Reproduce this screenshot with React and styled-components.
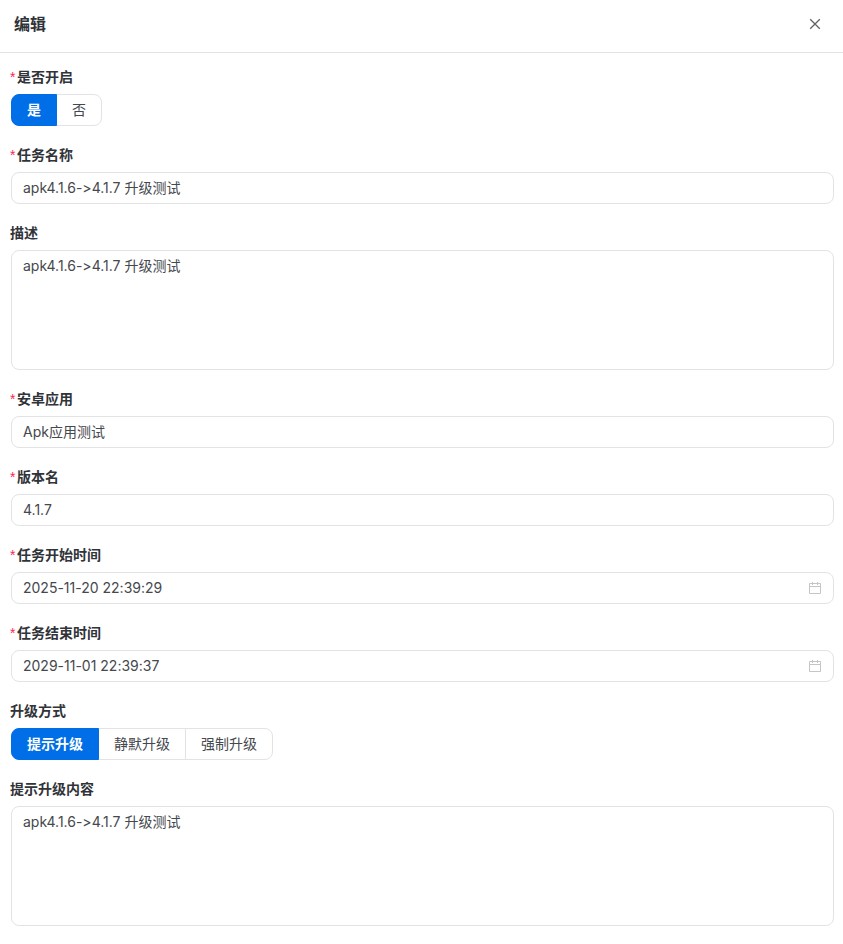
import React, { useId, useState } from "react";
import styled, { createGlobalStyle } from "styled-components";

const GlobalStyle = createGlobalStyle`
  *, *::before, *::after { box-sizing: border-box; }
  body {
    margin: 0;
    background: #fff;
    color: #45484d;
    font-family: Inter, "Noto Sans CJK SC", sans-serif;
    font-size: 14px;
    line-height: 22px;
    font-variant-ligatures: none;
  }
  input, textarea, button { font: inherit; color: inherit; font-variant-ligatures: none; }
`;

const Header = styled.header`
  display: flex;
  align-items: center;
  justify-content: space-between;
  padding: 12px 20px 16px 14px;
  border-bottom: 1px solid #e2e3e5;
`;

const Title = styled.h1`
  margin: 0;
  color: #303338;
  font-size: 16px;
  font-weight: 600;
  line-height: 24px;
`;

const CloseButton = styled.button`
  display: flex;
  padding: 0;
  border: 0;
  background: none;
  color: #606266;
  cursor: pointer;
`;

const Form = styled.form`
  display: flex;
  flex-direction: column;
  gap: 18px;
  padding: 13px 9px 18px 11px;
`;

const Field = styled.div`
  display: flex;
  flex-direction: column;
  gap: 6px;
`;

const Group = styled.fieldset`
  min-width: 0;
  margin: 0;
  padding: 0;
  border: 0;
`;

const Label = styled.label`
  display: flex;
  align-items: center;
  gap: 1px;
  margin-left: -1px;
  color: #303338;
  font-weight: 600;
`;

const Required = styled.span`
  width: 6px;
  color: #ff1f4b;
  font-family: "Liberation Sans", sans-serif;
  font-size: 14px;
  font-weight: 400;
`;

const TextBox = styled.input`
  width: 100%;
  height: 32px;
  padding: 0 11px 2px;
  border: 1px solid #e2e3e5;
  border-radius: 8px;
  background: #fff;
  outline: none;

  &:focus { border-color: #006ee6; }
`;

const TextArea = styled.textarea`
  display: block;
  width: 100%;
  height: 120px;
  padding: 4px 11px;
  border: 1px solid #e2e3e5;
  border-radius: 8px;
  background: #fff;
  outline: none;
  resize: none;

  &:focus { border-color: #006ee6; }
`;

const DateBox = styled.div`
  display: flex;
  align-items: center;
  height: 32px;
  padding: 0 11px;
  border: 1px solid #e2e3e5;
  border-radius: 8px;
  color: #45484d;

  &:focus-within { border-color: #006ee6; }

  svg {
    flex: none;
    color: #c4c5c7;
  }
`;

const DateInput = styled.input`
  flex: 1;
  min-width: 0;
  padding: 0;
  border: 0;
  background: none;
  outline: none;
`;

const Segments = styled.div`
  display: flex;
`;

const Segment = styled.label`
  position: relative;
  height: 32px;
  padding: 4px 15px;
  border: 1px solid ${(p) => (p.$active ? "#006ee6" : "#e2e3e5")};
  background: ${(p) => (p.$active ? "#006ee6" : "#fff")};
  color: ${(p) => (p.$active ? "#fff" : "inherit")};
  font-weight: ${(p) => (p.$active ? 600 : 400)};
  z-index: ${(p) => (p.$active ? 1 : 0)};
  cursor: pointer;

  &:first-child { border-radius: 8px 0 0 8px; }
  &:last-child { border-radius: 0 8px 8px 0; }
  & + & { margin-left: -1px; }
`;

const HiddenRadio = styled.input`
  position: absolute;
  inset: 0;
  width: 100%;
  height: 100%;
  margin: 0;
  opacity: 0;
  cursor: pointer;
`;

function CloseIcon() {
  return (
    <svg width="16" height="16" viewBox="0 0 16 16" fill="none" stroke="currentColor" strokeWidth="1.3" aria-hidden="true">
      <path d="M3.2 3.2 L12.8 12.8 M12.8 3.2 L3.2 12.8" />
    </svg>
  );
}

function CalendarIcon() {
  return (
    <svg width="14" height="14" viewBox="0 0 14 14" fill="none" stroke="currentColor" aria-hidden="true">
      <path d="M1.5 2.5 H12.5 V12.5 H1.5 Z M1.5 5.5 H12.5 M4.5 1 V4 M9.5 1 V4" />
    </svg>
  );
}

function FieldLabel({ required, children, ...rest }) {
  return (
    <Label {...rest}>
      {required && <Required aria-hidden="true">*</Required>}
      {children}
    </Label>
  );
}

function TextField({ label, value, required }) {
  const id = useId();
  return (
    <Field>
      <FieldLabel htmlFor={id} required={required}>{label}</FieldLabel>
      <TextBox id={id} type="text" defaultValue={value} required={required} />
    </Field>
  );
}

function AreaField({ label, value }) {
  const id = useId();
  return (
    <Field>
      <FieldLabel htmlFor={id}>{label}</FieldLabel>
      <TextArea id={id} defaultValue={value} />
    </Field>
  );
}

function DateField({ label, value }) {
  const id = useId();
  return (
    <Field>
      <FieldLabel htmlFor={id} required>{label}</FieldLabel>
      <DateBox>
        <DateInput id={id} type="text" defaultValue={value} required />
        <CalendarIcon />
      </DateBox>
    </Field>
  );
}

function RadioField({ label, options, required }) {
  const id = useId();
  const [selected, setSelected] = useState(options[0]);
  return (
    <Group aria-labelledby={id}>
      <Field>
        <FieldLabel as="div" id={id} required={required}>{label}</FieldLabel>
        <Segments>
          {options.map((option) => (
            <Segment key={option} $active={option === selected}>
              <HiddenRadio
                type="radio"
                name={id}
                checked={option === selected}
                onChange={() => setSelected(option)}
              />
              {option}
            </Segment>
          ))}
        </Segments>
      </Field>
    </Group>
  );
}

export default function App() {
  return (
    <main>
      <GlobalStyle />
      <Header>
        <Title>编辑</Title>
        <CloseButton type="button" aria-label="关闭">
          <CloseIcon />
        </CloseButton>
      </Header>
      <Form>
        <RadioField label="是否开启" options={["是", "否"]} required />
        <TextField label="任务名称" value="apk4.1.6->4.1.7 升级测试" required />
        <AreaField label="描述" value="apk4.1.6->4.1.7 升级测试" />
        <TextField label="安卓应用" value="Apk应用测试" required />
        <TextField label="版本名" value="4.1.7" required />
        <DateField label="任务开始时间" value="2025-11-20 22:39:29" />
        <DateField label="任务结束时间" value="2029-11-01 22:39:37" />
        <RadioField label="升级方式" options={["提示升级", "静默升级", "强制升级"]} />
        <AreaField label="提示升级内容" value="apk4.1.6->4.1.7 升级测试" />
      </Form>
    </main>
  );
}
